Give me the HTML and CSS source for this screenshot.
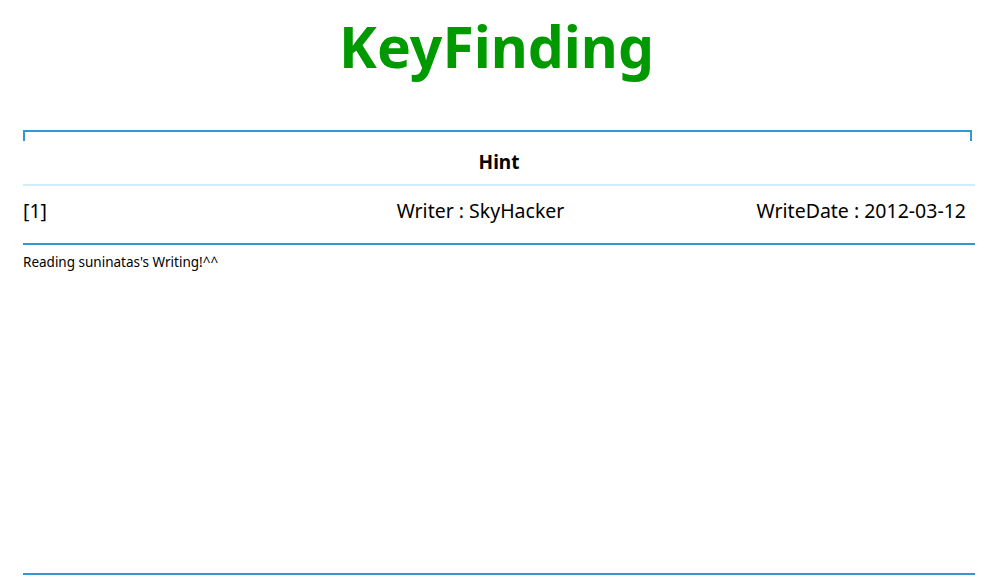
FILE: index.html
```html
<!DOCTYPE html>
<html lang="en">
<head>
  <meta charset="UTF-8">
  <meta name="viewport" content="width=device-width, initial-scale=1.0">
  <title>KeyFinding</title>
  <link rel="stylesheet" href="styles.css">
</head>
<body>
  <h1 class="title">KeyFinding</h1>

  <div class="board">
    <div class="board-top"></div>
    <div class="board-head">Hint</div>
    <div class="board-info">
      <span class="info-num">[1]</span>
      <span class="info-writer">Writer : SkyHacker</span>
      <span class="info-date">WriteDate : 2012-03-12</span>
    </div>
    <div class="board-body">Reading suninatas's Writing!^^</div>
  </div>
</body>
</html>
```

FILE: styles.css
```css
body {
  margin: 0;
  font-family: "Noto Sans", "Noto Sans CJK KR", sans-serif;
  color: #000;
  background: #fff;
}

.title {
  margin: 0;
  height: 130px;
  padding-top: 6px;
  box-sizing: border-box;
  text-align: center;
  font-size: 57px;
  font-weight: bold;
  line-height: 80px;
  color: #009900;
}

.board {
  margin: 0 18px 0 23px;
}

.board-top {
  height: 9px;
  margin-right: 3px;
  border: 2px solid #3497d3;
  border-bottom: none;
}

.board-head {
  height: 43px;
  line-height: 42px;
  text-align: center;
  font-size: 19px;
  font-weight: bold;
  border-bottom: 2px solid #d0ecf9;
}

.board-info {
  display: flex;
  justify-content: space-between;
  align-items: center;
  height: 59px;
  padding: 0 9px 9px 0;
  box-sizing: border-box;
  font-size: 19.5px;
  border-bottom: 2px solid #3497d3;
}

.info-num,
.info-date {
  flex: 1;
}

.info-writer {
  margin-right: 28px;
}

.info-date {
  text-align: right;
}

.board-body {
  height: 330px;
  padding-top: 8px;
  box-sizing: border-box;
  font-size: 13.5px;
  border-bottom: 2px solid #3497d3;
}
```
